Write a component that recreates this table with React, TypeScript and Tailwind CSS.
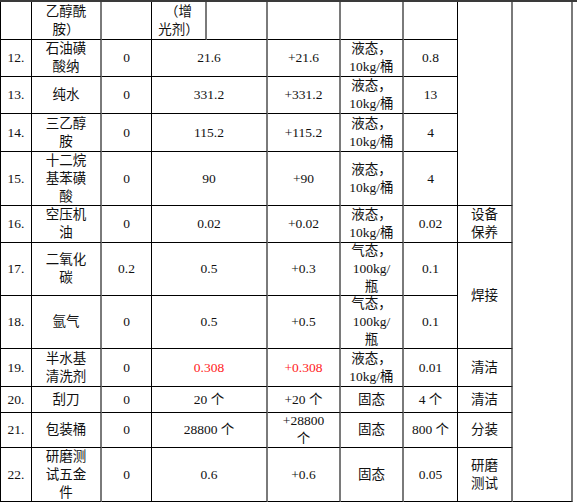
import React from "react";

type Row = {
  no: string;
  name: string[];
  before: string;
  after: string[];
  diff: string[];
  state: string[];
  amount: string;
  use?: string[];
  useSpan?: boolean;
  red?: boolean;
};

const rows: Row[] = [
  { no: "12.", name: ["石油磺", "酸纳"], before: "0", after: ["21.6"], diff: ["+21.6"], state: ["液态，", "10kg/桶"], amount: "0.8" },
  { no: "13.", name: ["纯水"], before: "0", after: ["331.2"], diff: ["+331.2"], state: ["液态，", "10kg/桶"], amount: "13" },
  { no: "14.", name: ["三乙醇", "胺"], before: "0", after: ["115.2"], diff: ["+115.2"], state: ["液态，", "10kg/桶"], amount: "4" },
  { no: "15.", name: ["十二烷", "基苯磺", "酸"], before: "0", after: ["90"], diff: ["+90"], state: ["液态，", "10kg/桶"], amount: "4" },
  { no: "16.", name: ["空压机", "油"], before: "0", after: ["0.02"], diff: ["+0.02"], state: ["液态，", "10kg/桶"], amount: "0.02", use: ["设备", "保养"] },
  { no: "17.", name: ["二氧化", "碳"], before: "0.2", after: ["0.5"], diff: ["+0.3"], state: ["气态，", "100kg/", "瓶"], amount: "0.1", use: ["焊接"], useSpan: true },
  { no: "18.", name: ["氩气"], before: "0", after: ["0.5"], diff: ["+0.5"], state: ["气态，", "100kg/", "瓶"], amount: "0.1" },
  { no: "19.", name: ["半水基", "清洗剂"], before: "0", after: ["0.308"], diff: ["+0.308"], state: ["液态，", "10kg/桶"], amount: "0.01", use: ["清洁"], red: true },
  { no: "20.", name: ["刮刀"], before: "0", after: ["20 个"], diff: ["+20 个"], state: ["固态"], amount: "4 个", use: ["清洁"] },
  { no: "21.", name: ["包装桶"], before: "0", after: ["28800 个"], diff: ["+28800", "个"], state: ["固态"], amount: "800 个", use: ["分装"] },
  { no: "22.", name: ["研磨测", "试五金", "件"], before: "0", after: ["0.6"], diff: ["+0.6"], state: ["固态"], amount: "0.05", use: ["研磨", "测试"] },
];

const cell = "flex flex-col items-center justify-center text-center leading-[18px] whitespace-nowrap border-b border-b-black";
const thin = "border-r border-r-black";
const thick = "border-r-2 border-r-[#7a7a7a]";

const Lines = ({ lines }: { lines: string[] }) => (
  <>
    {lines.map((l, i) => (
      <span key={i}>{l}</span>
    ))}
  </>
);

export default function App() {
  return (
    <div className="w-[577px] h-[504px] bg-white border-t-2 border-t-[#3a3a3a] font-['Liberation_Serif','Noto_Sans_CJK_SC',serif] text-[13.5px] text-[#111]">
      <div className="grid grid-cols-[32px_70px_50px_55px_61px_73px_63px_54px_55px_60px] grid-rows-[38px_37px_37px_38px_54px_37px_53px_53px_38px_26px_35px_54px] w-[573px]">
        {/* carried-over header row */}
        <div className={`${cell} ${thin} border-l border-l-black`} />
        <div className={`${cell} ${thick}`}>
          <span>乙醇酰</span>
          <span>胺）</span>
        </div>
        <div className={`${cell} ${thin}`} />
        <div className={`${cell} ${thick}`}>
          <span>（增</span>
          <span>光剂）</span>
        </div>
        <div className={`${cell} ${thick}`} />
        <div className={`${cell} ${thick}`} />
        <div className={`${cell} ${thick}`} />
        <div className={`${cell} ${thin}`} />
        <div className={`${cell} ${thick} row-span-5`} />
        <div className={`${cell} ${thick} row-span-12`} />

        {rows.map((r) => (
          <React.Fragment key={r.no}>
            <div className={`${cell} ${thin} border-l border-l-black`}>{r.no}</div>
            <div className={`${cell} ${thick}`}>
              <Lines lines={r.name} />
            </div>
            <div className={`${cell} ${thin}`}>{r.before}</div>
            <div className={`${cell} ${thick} col-span-2 ${r.red ? "text-[#ff1a1a]" : ""}`}>
              <Lines lines={r.after} />
            </div>
            <div className={`${cell} ${thick} ${r.red ? "text-[#ff1a1a]" : ""}`}>
              <Lines lines={r.diff} />
            </div>
            <div className={`${cell} ${thick}`}>
              <Lines lines={r.state} />
            </div>
            <div className={`${cell} ${thin}`}>{r.amount}</div>
            {r.use && (
              <div className={`${cell} ${thick} ${r.useSpan ? "row-span-2" : ""}`}>
                <Lines lines={r.use} />
              </div>
            )}
          </React.Fragment>
        ))}
      </div>
    </div>
  );
}
